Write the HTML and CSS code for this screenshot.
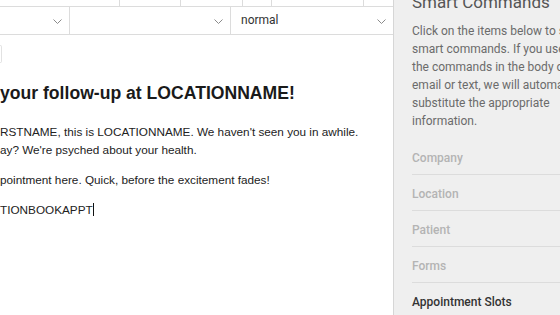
FILE: index.html
```html
<html>
<head>
<meta charset="utf-8" />
<title>Edit message</title>
<link rel="stylesheet" href="styles.css">
</head>
<body>
<div class="page">
	<div class="editor-col">
		<div class="toolbar-top">
			<span class="tb-cell c1"></span>
			<span class="tb-cell c2"></span>
			<span class="tb-cell c3"></span>
			<span class="tb-cell c4"></span>
			<span class="tb-cell c5"></span>
			<span class="tb-cell c6"></span>
		</div>
		<div class="toolbar-selects">
			<div class="select sel-a">
				<span class="sel-value"></span>
				<svg class="chevron" width="9" height="5" viewBox="0 0 9 5"><polyline points="0.5,0.5 4.5,4.5 8.5,0.5" fill="none" stroke="#8a8a8a" stroke-width="1"/></svg>
			</div>
			<div class="select sel-b">
				<span class="sel-value"></span>
				<svg class="chevron" width="9" height="5" viewBox="0 0 9 5"><polyline points="0.5,0.5 4.5,4.5 8.5,0.5" fill="none" stroke="#8a8a8a" stroke-width="1"/></svg>
			</div>
			<div class="select sel-c">
				<span class="sel-value">normal</span>
				<svg class="chevron" width="9" height="5" viewBox="0 0 9 5"><polyline points="0.5,0.5 4.5,4.5 8.5,0.5" fill="none" stroke="#8a8a8a" stroke-width="1"/></svg>
			</div>
		</div>
		<div class="editor">
			<div class="edge"></div>
			<h2 class="msg-title">your follow-up at LOCATIONNAME!</h2>
			<p class="msg-line">RSTNAME, this is LOCATIONNAME. We haven't seen you in awhile.<br/>ay? We're psyched about your health.</p>
			<p class="msg-line">pointment here. Quick, before the excitement fades!</p>
			<p class="msg-line">TIONBOOKAPPT<span class="caret"></span></p>
		</div>
	</div>

	<div class="panel">
		<h3 class="panel-title">Smart Commands</h3>
		<p class="panel-desc">Click on the items below to see smart commands. If you use any of the commands in the body of an email or text, we will automatically substitute the appropriate information.</p>
		<ul class="cmd-list">
			<li class="cmd">Company</li>
			<li class="cmd">Location</li>
			<li class="cmd">Patient</li>
			<li class="cmd">Forms</li>
			<li class="cmd active">Appointment Slots</li>
		</ul>
	</div>
</div>
</body>
</html>
```

FILE: styles.css
```css
body{
	margin: 0;
	background: #fff;
	font-family: Roboto, "Liberation Sans", Arial, sans-serif;
}

.page{
	display: flex;
	width: 560px;
	height: 315px;
	overflow: hidden;
}

.editor-col{
	width: 393px;
	flex: none;
	border-right: 1px solid #d6d6d6;
	background: #fff;
}

.toolbar-top{
	display: flex;
	height: 6px;
	border-bottom: 1px solid #dcdcdc;
}

.tb-cell{
	height: 6px;
	border-right: 1px solid #dcdcdc;
}
.c1{ width: 119px; }
.c2{ width: 60px; }
.c3{ width: 61px; }
.c4{ width: 28px; }
.c5{ width: 91px; }
.c6{ flex: 1; border-right: none; }

.toolbar-selects{
	display: flex;
	height: 27px;
	border-bottom: 1px solid #dcdcdc;
}

.select{
	display: flex;
	align-items: center;
	justify-content: space-between;
	height: 27px;
	padding: 0 7px 0 10px;
	border-right: 1px solid #dcdcdc;
	box-sizing: border-box;
}
.sel-a{ width: 70px; }
.sel-b{ width: 161px; }
.sel-c{ width: 162px; border-right: none; }

.sel-value{
	font-size: 12px;
	line-height: 27px;
	color: #333;
}

.chevron{
	display: block;
	margin-top: 1px;
}

.editor{
	padding-top: 10px;
	font-family: "Liberation Sans", Arial, sans-serif;
	color: #222;
}

.edge{
	width: 2px;
	height: 18px;
	border: 1px solid #e2e2e2;
	border-left: none;
	border-radius: 0 4px 4px 0;
	box-sizing: border-box;
}

.msg-title{
	margin: 19px 0 0;
	font-size: 17.6px;
	line-height: 22px;
	font-weight: bold;
	color: #1a1a1a;
}

.msg-line{
	margin: 19px 0 0;
	font-size: 11.75px;
	line-height: 18px;
}
.msg-line + .msg-line{
	margin-top: 12px;
}

.caret{
	display: inline-block;
	width: 1px;
	height: 13px;
	background: #111;
	vertical-align: -2px;
}

.panel{
	flex: 1;
	background: #efefef;
	padding-left: 18px;
	overflow: hidden;
}

.panel-title{
	margin: -8px 0 0;
	font-size: 17px;
	line-height: 20px;
	font-weight: normal;
	color: #555;
	white-space: nowrap;
}

.panel-desc{
	width: 192px;
	margin: 10px 0 0;
	font-size: 12px;
	line-height: 18px;
	color: #6b6b6b;
}

.cmd-list{
	list-style: none;
	margin: 9px 0 0;
	padding: 0;
	width: 200px;
}

.cmd{
	padding: 10px 0 7px;
	border-bottom: 1px solid #dcdcdc;
	font-size: 12px;
	line-height: 18px;
	font-weight: 500;
	color: #b4b4b4;
	white-space: nowrap;
}

.cmd.active{
	color: #333;
	border-bottom: none;
}
```
